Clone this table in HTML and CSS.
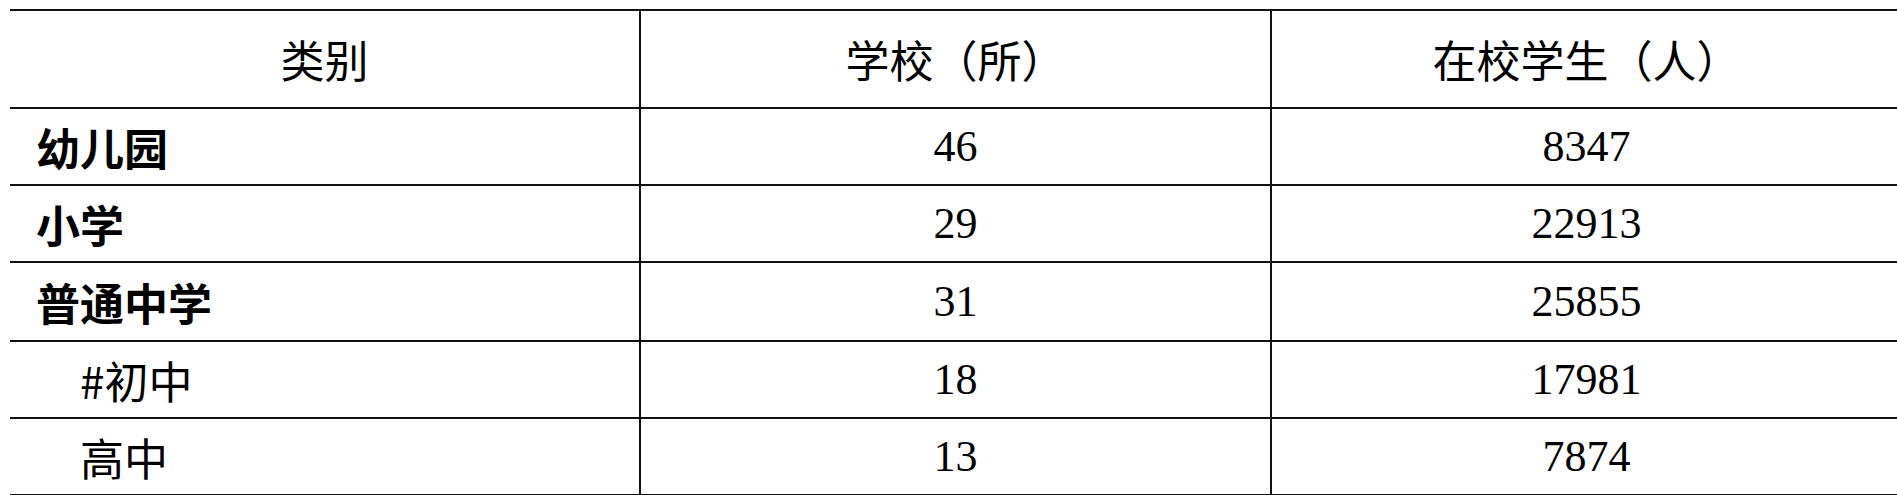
FILE: index.html
```html
<!DOCTYPE html>
<html lang="zh-CN">
<head>
<meta charset="utf-8">
<title>学校统计</title>
<link rel="stylesheet" href="styles.css">
</head>
<body>
<table class="stats">
  <thead>
    <tr class="head-row">
      <th class="cell">类别</th>
      <th class="cell">学校（所）</th>
      <th class="cell">在校学生（人）</th>
    </tr>
  </thead>
  <tbody>
    <tr class="row">
      <td class="cell name strong">幼儿园</td>
      <td class="cell num">46</td>
      <td class="cell num">8347</td>
    </tr>
    <tr class="row">
      <td class="cell name strong">小学</td>
      <td class="cell num">29</td>
      <td class="cell num">22913</td>
    </tr>
    <tr class="row row-tall">
      <td class="cell name strong">普通中学</td>
      <td class="cell num">31</td>
      <td class="cell num">25855</td>
    </tr>
    <tr class="row">
      <td class="cell name sub">#初中</td>
      <td class="cell num">18</td>
      <td class="cell num">17981</td>
    </tr>
    <tr class="row">
      <td class="cell name sub">高中</td>
      <td class="cell num">13</td>
      <td class="cell num">7874</td>
    </tr>
  </tbody>
</table>
</body>
</html>
```
FILE: styles.css
```css
html, body {
  margin: 0;
  padding: 0;
  background: #ffffff;
  overflow: hidden;
}

body {
  padding-top: 9px;
  padding-left: 10px;
  font-family: "Liberation Serif", "Noto Sans CJK SC", serif;
  color: #000000;
}

.stats {
  border-collapse: collapse;
  table-layout: fixed;
  width: 1888px;
}

.cell {
  width: 629px;
  border: 2px solid #111111;
  padding: 0;
  vertical-align: middle;
  text-align: center;
  font-size: 44px;
  line-height: 1;
}

.stats tr > .cell:first-child {
  border-left: none;
}

.head-row .cell {
  height: 96px;
  font-family: "Noto Sans CJK SC", sans-serif;
  font-weight: 400;
}

.row .cell {
  height: 75px;
}

.row-tall .cell {
  height: 77px;
}

.name {
  text-align: left;
  padding-left: 26px;
  font-family: "Noto Sans CJK SC", sans-serif;
}

.strong {
  font-weight: 700;
}

.sub {
  font-weight: 400;
  text-indent: 44px;
}

.num {
  font-family: "Liberation Serif", serif;
  letter-spacing: 0;
}
```
